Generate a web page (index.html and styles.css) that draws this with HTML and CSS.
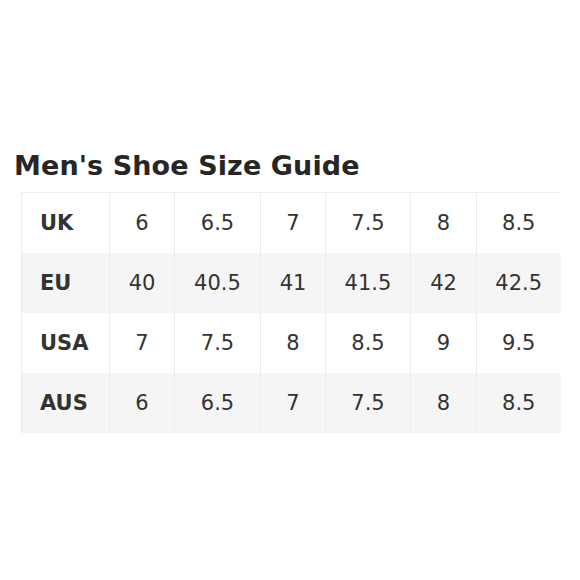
FILE: index.html
```html
<!DOCTYPE html>
<html>
<head>
<meta charset="utf-8">
<link rel="stylesheet" href="styles.css">
</head>
<body>
<div class="page">
  <h1 class="title">Men's Shoe Size Guide</h1>
  <table class="sizes">
    <colgroup>
      <col class="c1"><col class="c2"><col class="c3"><col class="c4"><col class="c5"><col class="c6"><col class="c7">
    </colgroup>
    <tr><th>UK</th><td>6</td><td>6.5</td><td>7</td><td>7.5</td><td>8</td><td>8.5</td></tr>
    <tr class="alt"><th>EU</th><td>40</td><td>40.5</td><td>41</td><td>41.5</td><td>42</td><td>42.5</td></tr>
    <tr><th>USA</th><td>7</td><td>7.5</td><td>8</td><td>8.5</td><td>9</td><td>9.5</td></tr>
    <tr class="alt"><th>AUS</th><td>6</td><td>6.5</td><td>7</td><td>7.5</td><td>8</td><td>8.5</td></tr>
  </table>
</div>
</body>
</html>
```

FILE: styles.css
```css
html, body {
  margin: 0;
  padding: 0;
  background: #ffffff;
}
.page {
  width: 580px;
  height: 580px;
  padding-top: 148px;
  box-sizing: border-box;
  font-family: "DejaVu Sans", "Liberation Sans", sans-serif;
  color: #2b2b2b;
}
.title {
  margin: 0 0 8px 14px;
  font-size: 27px;
  line-height: 36px;
  font-weight: bold;
  color: #262626;
  letter-spacing: 0.1px;
}
.sizes {
  margin-left: 21px;
  border-collapse: collapse;
  table-layout: fixed;
  width: 539px;
  border-top: 1px solid #ececec;
  border-left: 1px solid #ececec;
}
.c1 { width: 88px; }
.c2 { width: 65px; }
.c3 { width: 86px; }
.c4 { width: 65px; }
.c5 { width: 85px; }
.c6 { width: 66px; }
.c7 { width: 84px; }
.sizes th, .sizes td {
  height: 60px;
  padding: 0;
  font-size: 21px;
  border-right: 1px solid #ececec;
  color: #333333;
}
.sizes td:last-child { border-right: none; }
.sizes th {
  text-align: left;
  padding-left: 18px;
  font-weight: bold;
}
.sizes td {
  text-align: center;
  font-weight: normal;
}
.sizes tr.alt { background: #f5f5f5; }
```
